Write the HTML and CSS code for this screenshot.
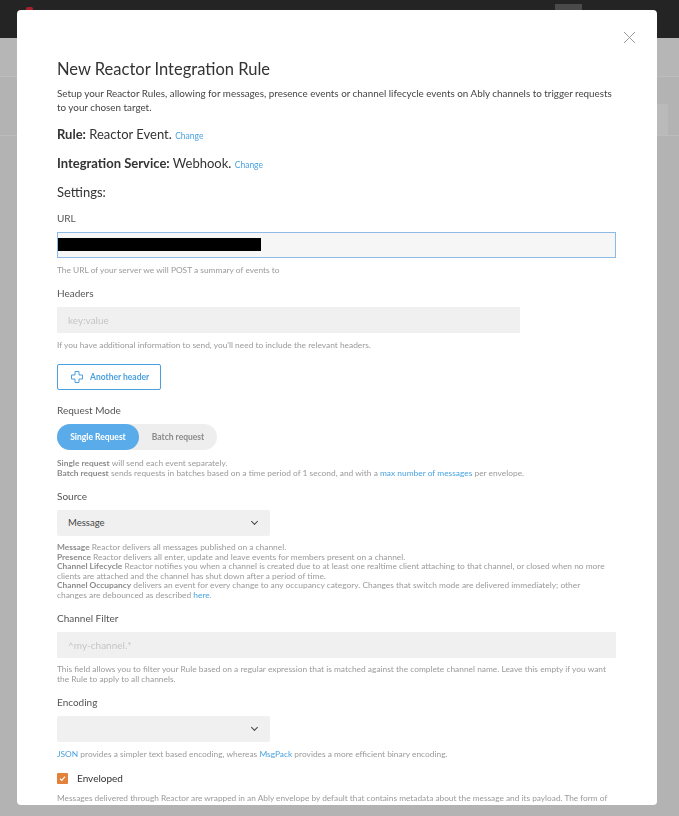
FILE: index.html
```html
<!DOCTYPE html>
<html lang="en">
<head>
  <meta charset="UTF-8" />
  <meta name="viewport" content="width=device-width, initial-scale=1.0" />
  <title>New Reactor Integration Rule</title>
  <link rel="stylesheet" href="styles.css">
</head>
<body>
<!-- page behind the dialog -->
<div class="page">
  <header class="topbar">
    <span class="logo"></span>
    <span class="top-tab"></span>
  </header>
  <div class="subnav"></div>
  <div class="page-body">
    <div class="side-box"></div>
  </div>
</div>

<div class="overlay">
  <div class="modal">
    <button class="close" aria-label="Close">
      <svg width="13" height="13" viewBox="0 0 13 13"><path d="M1 1 L12 12 M12 1 L1 12" stroke="#9a9a9a" stroke-width="1" fill="none"/></svg>
    </button>

    <h1>New Reactor Integration Rule</h1>
    <p class="intro">Setup your Reactor Rules, allowing for messages, presence events or channel lifecycle events on Ably channels to trigger requests to your chosen target.</p>

    <p class="summary"><b>Rule:</b> Reactor Event. <a href="#" class="change">Change</a></p>
    <p class="summary"><b>Integration Service:</b> Webhook. <a href="#" class="change">Change</a></p>
    <p class="summary settings">Settings:</p>

    <div class="field">
      <label for="url">URL</label>
      <div class="input focused" id="url"><span class="redacted"></span></div>
      <p class="help">The URL of your server we will POST a summary of events to</p>
    </div>

    <div class="field">
      <label for="headers">Headers</label>
      <div class="input medium placeholder" id="headers">key:value</div>
      <p class="help">If you have additional information to send, you'll need to include the relevant headers.</p>
    </div>

    <button class="add-header">
      <svg width="12" height="12" viewBox="0 0 12 12"><path d="M4 0.5 H8 V4 H11.5 V8 H8 V11.5 H4 V8 H0.5 V4 H4 Z" stroke="#4a9fdf" stroke-width="1" fill="none"/></svg>
      Another header
    </button>

    <div class="field">
      <label>Request Mode</label>
      <div class="toggle">
        <span class="toggle-item active">Single Request</span>
        <span class="toggle-item">Batch request</span>
      </div>
      <p class="help lines"><b>Single request</b> will send each event separately.<br><b>Batch request</b> sends requests in batches based on a time period of 1 second, and with a <a href="#">max number of messages</a> per envelope.</p>
    </div>

    <div class="field">
      <label>Source</label>
      <div class="select">Message <span class="chev"></span></div>
      <p class="help lines dense"><b>Message</b> Reactor delivers all messages published on a channel.<br><b>Presence</b> Reactor delivers all enter, update and leave events for members present on a channel.<br><b>Channel Lifecycle</b> Reactor notifies you when a channel is created due to at least one realtime client attaching to that channel, or closed when no more clients are attached and the channel has shut down after a period of time.<br><b>Channel Occupancy</b> delivers an event for every change to any occupancy category. Changes that switch mode are delivered immediately; other changes are debounced as described <a href="#">here</a>.</p>
    </div>

    <div class="field">
      <label>Channel Filter</label>
      <div class="input placeholder">^my-channel.*</div>
      <p class="help lines">This field allows you to filter your Rule based on a regular expression that is matched against the complete channel name. Leave this empty if you want the Rule to apply to all channels.</p>
    </div>

    <div class="field">
      <label>Encoding</label>
      <div class="select"><span class="chev"></span></div>
      <p class="help"><a href="#">JSON</a> provides a simpler text based encoding, whereas <a href="#">MsgPack</a> provides a more efficient binary encoding.</p>
    </div>

    <div class="check-row">
      <span class="checkbox">
        <svg width="11" height="11" viewBox="0 0 11 11"><path d="M3 5.8 L4.8 7.4 L8 3.6" stroke="#fff" stroke-width="1.2" fill="none"/></svg>
      </span>
      Enveloped
    </div>
    <p class="help lines wide">Messages delivered through Reactor are wrapped in an Ably envelope by default that contains metadata about the message and its payload. The form of the envelope depends on the rule source and is described in the <a href="#">Webhook Specification</a>. If you disable enveloping, the payload is delivered as is.</p>
  </div>
</div>
</body>
</html>
```

FILE: styles.css
```css
* {
  box-sizing: border-box;
}

body {
  margin: 0;
  font-family: "Lato", "Liberation Sans", sans-serif;
  background: #b3b3b3;
  overflow: hidden;
}

/* page behind the overlay */
.topbar {
  height: 38px;
  background: #242424;
  position: relative;
}
.logo {
  position: absolute;
  left: 26px;
  top: 7px;
  width: 7px;
  height: 8px;
  border-radius: 2px;
  background: #a8212a;
}
.top-tab {
  position: absolute;
  left: 555px;
  top: 4px;
  width: 27px;
  height: 12px;
  background: #4a4a4a;
}
.subnav {
  height: 39px;
  background: #b6b6b6;
  border-bottom: 1px solid #bdbdbd;
}
.page-body {
  height: 59px;
  border-bottom: 1px solid #bcbcbc;
  display: flex;
  justify-content: flex-end;
  align-items: flex-end;
}
.side-box {
  width: 11px;
  height: 31px;
  margin-right: 11px;
  background: #bababa;
}

/* dialog */
.overlay {
  position: fixed;
  inset: 0;
  padding: 10px 22px 0 17px;
}
.modal {
  position: relative;
  width: 640px;
  height: 795px;
  background: #fff;
  border-radius: 4px;
  padding: 48px 41px 0 40px;
  overflow: hidden;
  color: #333;
}
.close {
  position: absolute;
  top: 21px;
  right: 21px;
  border: none;
  background: none;
  padding: 0;
  width: 13px;
  height: 13px;
}
.close svg {
  display: block;
}

h1 {
  font-size: 16.5px;
  font-weight: 400;
  line-height: 22px;
  margin: 0 0 6px;
}
.intro {
  font-size: 9.85px;
  line-height: 14px;
  color: #444;
  margin: 0 0 11px;
}
.summary {
  font-size: 13px;
  line-height: 18px;
  margin: 0 0 9px;
}
.summary b {
  font-weight: 700;
}
.change {
  font-size: 8.5px;
  color: #4aa3e0;
  text-decoration: none;
}
.summary.settings {
  margin-bottom: 10px;
}

a {
  color: #4aa3e0;
  text-decoration: none;
}

.field {
  margin-bottom: 11px;
}
label {
  display: block;
  font-size: 10px;
  line-height: 14px;
  color: #555;
  margin-bottom: 7px;
}
.input {
  height: 26px;
  background: #f0f0f0;
  font-size: 10px;
  line-height: 26px;
  padding: 0 11px;
  color: #444;
}
.input.medium {
  width: 463px;
}
.input.focused {
  background: #f6f6f6;
  border: 1px solid #8dbbe5;
  padding: 0;
  line-height: 24px;
}
.redacted {
  display: inline-block;
  width: 203px;
  height: 13px;
  margin: 5px 0 0 0;
  background: #000;
  vertical-align: top;
}
.placeholder {
  color: #c5c5c5;
}
.help {
  max-width: 553px;
  font-size: 8.4px;
  line-height: 10px;
  color: #9a9a9a;
  margin: 7px 0 0;
}
.help.lines {
  line-height: 9.6px;
}
.help.dense {
  line-height: 9.5px;
}
.help.wide {
  max-width: none;
  font-size: 8.3px;
}
.help b {
  font-weight: 700;
  color: #8a8a8a;
}
.toggle + .help {
  margin-top: 9px;
}

.add-header {
  display: flex;
  align-items: center;
  gap: 7px;
  width: 104px;
  height: 26px;
  padding: 0 0 0 13px;
  margin: 14px 0 13px;
  background: #fff;
  border: 1px solid #4a9fdf;
  border-radius: 2px;
  color: #4a9fdf;
  font-family: inherit;
  font-size: 8.5px;
  font-weight: 700;
}
.add-header svg {
  display: block;
}

.toggle {
  display: flex;
  width: 160px;
  height: 26px;
  background: #eeeeee;
  border-radius: 13px;
}
.toggle-item {
  flex: 1;
  display: flex;
  align-items: center;
  justify-content: center;
  font-size: 8.5px;
  font-weight: 700;
  color: #8a8a8a;
  border-radius: 13px;
}
.toggle-item.active {
  flex: 0 0 82px;
  background: #5aabea;
  color: #fff;
}

.select {
  position: relative;
  width: 213px;
  height: 26px;
  background: #f0f0f0;
  border-radius: 2px;
  font-size: 9.5px;
  line-height: 26px;
  padding: 0 11px;
  color: #444;
}
.chev {
  position: absolute;
  right: 13px;
  top: 9px;
  width: 5px;
  height: 5px;
  border-right: 1.5px solid #444;
  border-bottom: 1.5px solid #444;
  transform: rotate(45deg);
}

.check-row {
  display: flex;
  align-items: center;
  gap: 9px;
  margin-top: 12px;
  font-size: 10px;
  line-height: 14px;
  color: #333;
}
.checkbox {
  width: 11px;
  height: 11px;
  border-radius: 1px;
  background: #e3803a;
}
.checkbox svg {
  display: block;
}
.check-row + .help {
  margin-top: 9px;
}
```
